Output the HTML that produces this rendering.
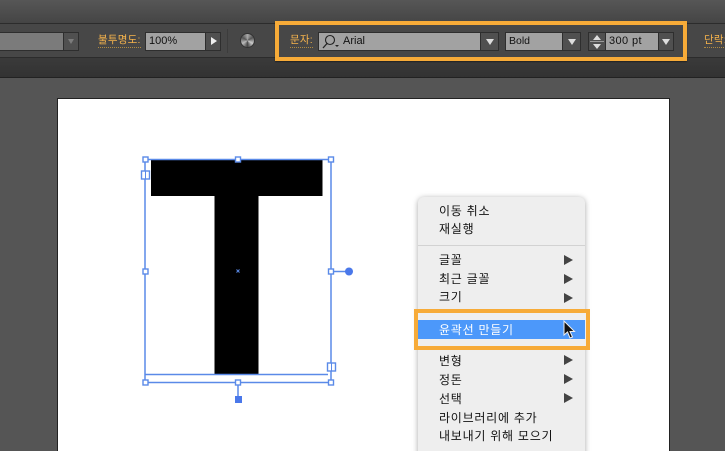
<!DOCTYPE html>
<html>
<head>
<meta charset="utf-8">
<style>
html,body{margin:0;padding:0;background:#535353;}
#p{position:relative;width:725px;height:451px;overflow:hidden;background:#555;font-family:"Liberation Sans","Noto Sans CJK KR",sans-serif;filter:blur(.3px);}
#p div{position:absolute;box-sizing:border-box;}
.t{white-space:nowrap;line-height:14px;}
.lab{color:#f7b44c;font-size:11px;border-bottom:1px dotted #b08a40;line-height:13px;height:14px;white-space:nowrap;letter-spacing:.2px;}
.field{background:#a2a2a2;border:1px solid #2e2e2e;color:#111;font-size:11px;line-height:16px;height:19px;white-space:nowrap;}
.btn{background:#505050;border:1px solid #2e2e2e;height:19px;}
.ar{width:0;height:0;border-left:4px solid transparent;border-right:4px solid transparent;border-top:6px solid #ddd;left:50%;top:6px;margin-left:-4px;}
.m{font-size:12px;color:#111;left:439px;letter-spacing:.75px;white-space:nowrap;line-height:16px;height:16px;}
.sub{width:0;height:0;border-top:5px solid transparent;border-bottom:5px solid transparent;border-left:9px solid #444;left:564px;}
</style>
</head>
<body>
<div id="p">
<div style="left:0;top:0;width:725px;height:24px;background:linear-gradient(#565656,#444)"></div>
<div style="left:0;top:23px;width:725px;height:1px;background:#2c2c2c"></div>
<div style="left:0;top:24px;width:725px;height:33px;background:#474747"></div>
<div style="left:0;top:57px;width:725px;height:1px;background:#2c2c2c"></div>
<div style="left:0;top:58px;width:725px;height:20px;background:linear-gradient(#3a3a3a,#323232)"></div>
<div style="left:0;top:77px;width:725px;height:1px;background:#222"></div>
<div style="left:0;top:78px;width:725px;height:373px;background:#555"></div>

<div class="field" style="left:-2px;top:32px;width:66px;background:#7b7b7b"></div>
<div class="btn" style="left:63px;top:32px;width:16px"><div class="ar" style="border-top-color:#7c7c7c;border-left-width:3px;border-right-width:3px;border-top-width:5px;margin-left:-3px"></div></div>
<div class="lab" style="left:98px;top:34px;width:43px;font-size:10.5px">불투명도:</div>
<div class="field" style="left:145px;top:32px;width:61px;padding-left:3px">100%</div>
<div class="btn" style="left:205px;top:32px;width:16px"><div style="left:5px;top:4px;width:0;height:0;border-top:4px solid transparent;border-bottom:4px solid transparent;border-left:6px solid #eee"></div></div>
<div style="left:227px;top:29px;width:1px;height:24px;background:#3c3c3c"></div>
<div style="left:240px;top:33px;width:15px;height:15px;border-radius:50%;background:conic-gradient(#aaa,#555,#ccc,#444,#bbb,#555,#aaa);border:1px solid #333"></div>

<div style="left:275px;top:21px;width:412px;height:40px;border:4px solid #f7ab38;background:#474747;box-shadow:0 1px 1px rgba(0,0,0,.4)"></div>
<div class="lab" style="left:290px;top:34px;width:23px;font-size:10.5px">문자:</div>
<div class="field" style="left:318px;top:32px;width:164px;padding-left:24px;color:#111">Arial</div>
<svg style="position:absolute;left:321px;top:33px" width="22" height="17" viewBox="0 0 22 17"><circle cx="9" cy="7" r="4.500" fill="none" stroke="#222" stroke-width="1.100"/><path d="M6 10.500L2 15" stroke="#222" stroke-width="1.300"/><path d="M14 12h4l-2 2z" fill="#222"/></svg>
<div class="btn" style="left:480px;top:32px;width:19px"><div class="ar"></div></div>
<div class="field" style="left:505px;top:32px;width:58px;padding-left:3px;font-size:10.5px">Bold</div>
<div class="btn" style="left:562px;top:32px;width:19px"><div class="ar"></div></div>
<div class="btn" style="left:588px;top:32px;width:18px"><div style="left:4px;top:2px;width:0;height:0;border-left:4px solid transparent;border-right:4px solid transparent;border-bottom:5px solid #ddd"></div><div style="left:1px;top:8px;width:14px;height:1px;background:#999"></div><div style="left:4px;top:11px;width:0;height:0;border-left:4px solid transparent;border-right:4px solid transparent;border-top:5px solid #ddd"></div></div>
<div class="field" style="left:605px;top:32px;width:54px;padding-left:3px;letter-spacing:.4px">300 pt</div>
<div class="btn" style="left:658px;top:32px;width:16px"><div class="ar"></div></div>
<div class="lab" style="left:704px;top:34px;width:30px;font-size:10.5px">단락:</div>

<div style="left:57px;top:98px;width:613px;height:360px;background:#fff;border:1px solid #222"></div>

<svg style="position:absolute;left:0;top:0" width="725" height="451" viewBox="0 0 725 451">
<path d="M151 159.500H322.500V196H258.500V375H214.500V196H151Z" fill="#000"/>
<g fill="none" stroke="#5a8ae8" stroke-width="1.500">
<path d="M145 159.500H331M145 159.500V382M331 159.500V382M145 374.500H328M145 382.500H331M238 382V398M331 271.500H349"/>
</g>
<g fill="#fff" stroke="#5a8ae8" stroke-width="1.400">
<rect x="143" y="157" width="5" height="5"/><rect x="235.500" y="157" width="5" height="5"/><rect x="328.500" y="157" width="5" height="5"/>
<rect x="143" y="269" width="5" height="5"/><rect x="328.500" y="269" width="5" height="5"/>
<rect x="143" y="380" width="5" height="5"/><rect x="235.500" y="380" width="5" height="5"/><rect x="328.500" y="380" width="5" height="5"/>
<rect x="141.500" y="171" width="8" height="8"/><rect x="327.500" y="363" width="8" height="8"/>
</g>
<path d="M145.500 171V179M331.500 363V371" stroke="#5a8ae8"/>
<circle cx="349" cy="271.500" r="4" fill="#4a78ea"/>
<rect x="235" y="396" width="7" height="7" fill="#4a78ea"/>
<path d="M236.500 269.500l3 3m0-3l-3 3" stroke="#5a8ae8" stroke-width="1"/>
</svg>

<div style="left:418px;top:197px;width:167px;height:270px;background:#eeeeee;border-radius:6px 6px 0 0;box-shadow:0 1px 6px rgba(0,0,0,.35)"></div>
<div class="m t" style="top:203px">이동 취소</div>
<div class="m t" style="top:221px">재실행</div>
<div style="left:418px;top:245px;width:167px;height:1px;background:#d2d2d2"></div>
<div class="m t" style="top:252px">글꼴</div>
<div class="m t" style="top:271px">최근 글꼴</div>
<div class="m t" style="top:289px">크기</div>
<div class="sub" style="top:255px"></div>
<div class="sub" style="top:274px"></div>
<div class="sub" style="top:293px"></div>

<div style="left:414px;top:309px;width:176px;height:41px;border:4px solid #f7ab38;background:#efefef"></div>
<div style="left:418px;top:320px;width:167px;height:19px;background:#4c98fa"></div>
<div class="m t" style="top:322px;color:#fff">윤곽선 만들기</div>
<svg style="position:absolute;left:562px;top:320px" width="14" height="20" viewBox="0 0 14 20"><path d="M2 1V15L5.500 12L8 18L10.500 17L8 11.500H12.500Z" fill="#111" stroke="#eee" stroke-width="1"/></svg>

<div class="m t" style="top:353px">변형</div>
<div class="m t" style="top:372px">정돈</div>
<div class="m t" style="top:391px">선택</div>
<div class="m t" style="top:410px">라이브러리에 추가</div>
<div class="m t" style="top:428px">내보내기 위해 모으기</div>
<div class="sub" style="top:355px"></div>
<div class="sub" style="top:374px"></div>
<div class="sub" style="top:393px"></div>
</div>
</body>
</html>
